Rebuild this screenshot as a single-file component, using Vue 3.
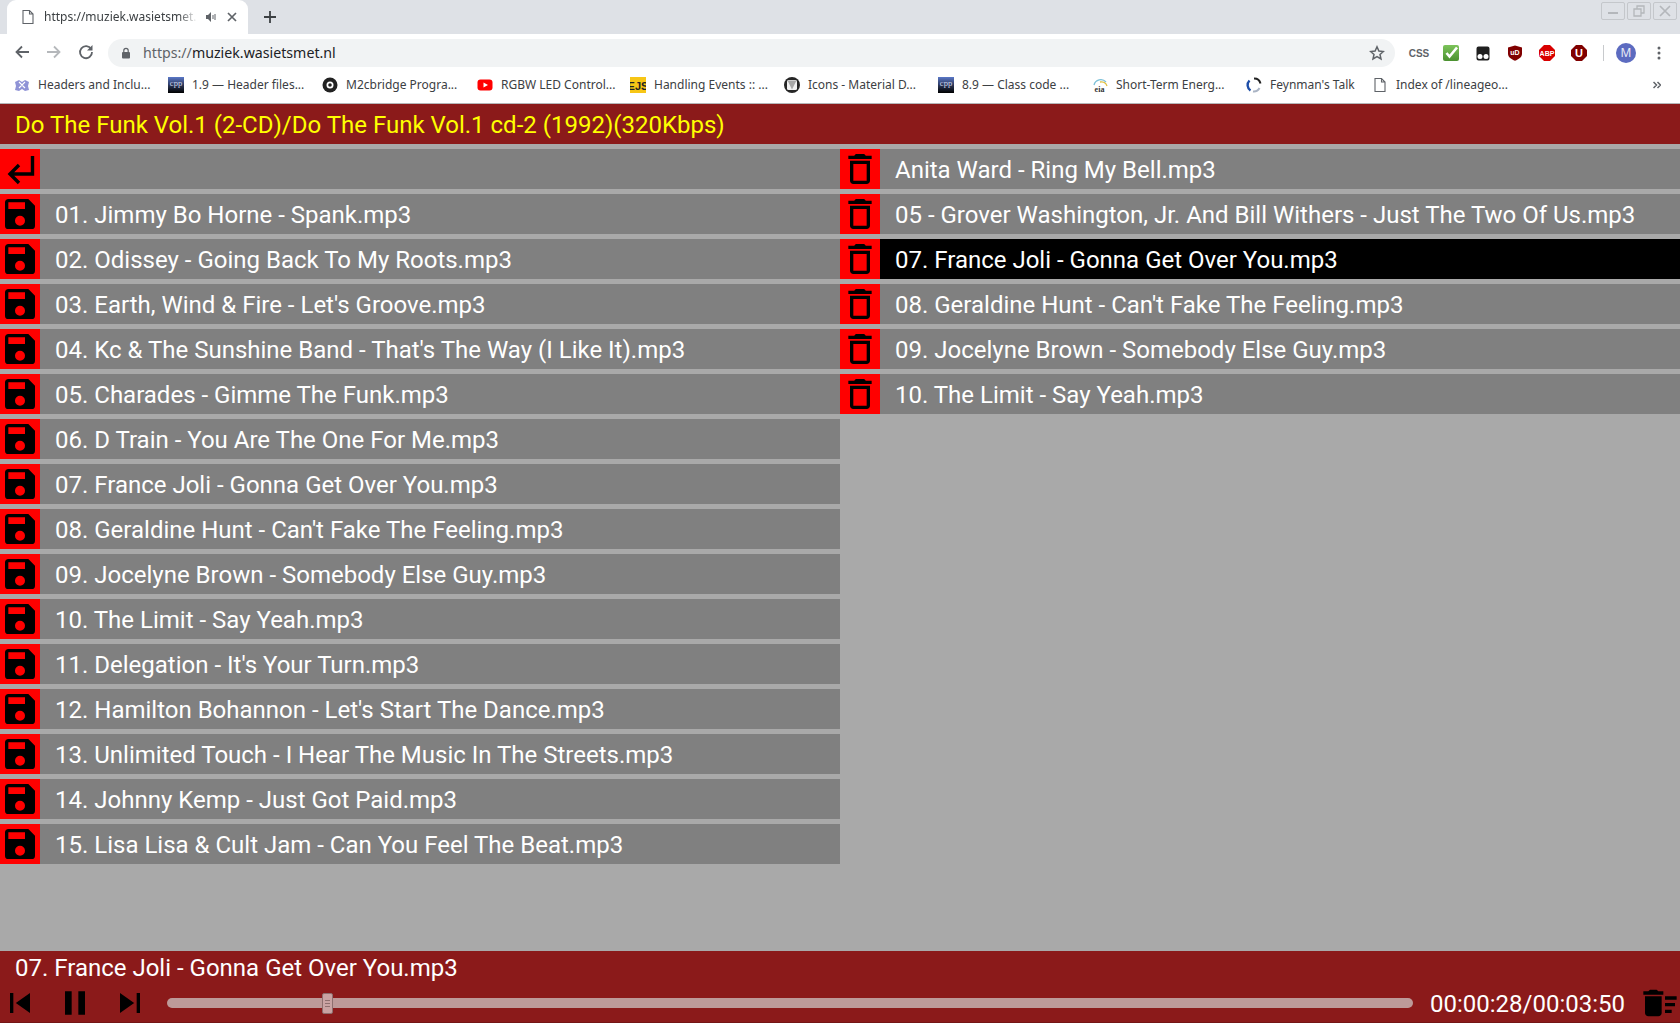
<script setup>
const leftTracks = [
  "01. Jimmy Bo Horne - Spank.mp3",
  "02. Odissey - Going Back To My Roots.mp3",
  "03. Earth, Wind & Fire - Let's Groove.mp3",
  "04. Kc & The Sunshine Band - That's The Way (I Like It).mp3",
  "05. Charades - Gimme The Funk.mp3",
  "06. D Train - You Are The One For Me.mp3",
  "07. France Joli - Gonna Get Over You.mp3",
  "08. Geraldine Hunt - Can't Fake The Feeling.mp3",
  "09. Jocelyne Brown - Somebody Else Guy.mp3",
  "10. The Limit - Say Yeah.mp3",
  "11. Delegation - It's Your Turn.mp3",
  "12. Hamilton Bohannon - Let's Start The Dance.mp3",
  "13. Unlimited Touch - I Hear The Music In The Streets.mp3",
  "14. Johnny Kemp - Just Got Paid.mp3",
  "15. Lisa Lisa & Cult Jam - Can You Feel The Beat.mp3",
];
const rightTracks = [
  { name: "Anita Ward - Ring My Bell.mp3" },
  { name: "05 - Grover Washington, Jr. And Bill Withers - Just The Two Of Us.mp3" },
  { name: "07. France Joli - Gonna Get Over You.mp3", active: true },
  { name: "08. Geraldine Hunt - Can't Fake The Feeling.mp3" },
  { name: "09. Jocelyne Brown - Somebody Else Guy.mp3" },
  { name: "10. The Limit - Say Yeah.mp3" },
];
const bookmarks = [
  { label: "Headers and Inclu...", kind: "puzzle", w: 154 },
  { label: "1.9 — Header files...", kind: "cpp", w: 154 },
  { label: "M2cbridge Progra...", kind: "disc", w: 155 },
  { label: "RGBW LED Control...", kind: "yt", w: 153 },
  { label: "Handling Events :: ...", kind: "ejs", w: 154 },
  { label: "Icons - Material D...", kind: "mat", w: 154 },
  { label: "8.9 — Class code ...", kind: "cpp", w: 154 },
  { label: "Short-Term Energ...", kind: "eia", w: 154 },
  { label: "Feynman's Talk", kind: "fey", w: 126 },
  { label: "Index of /lineageo...", kind: "page", w: 140 },
];
</script>

<template>
  <div class="page">
    <div class="tabstrip">
      <div class="tab">
        <svg class="tab-fav" width="16" height="16" viewBox="0 0 16 16"><path d="M3 1.500h6.500L13 5v9.500H3z M9.500 1.500V5H13" fill="none" stroke="#5f6368" stroke-width="1.100"/></svg>
        <span class="tab-title">https://muziek.wasietsmet.r</span>
        <svg class="tab-audio" width="12" height="12" viewBox="0 0 12 12"><path d="M1 4h2l3-3v10L3 8H1z" fill="#5f6368"/><path d="M8 4v4M10 3v6" stroke="#5f6368" stroke-width="1"/></svg>
        <svg class="tab-close" width="10" height="10" viewBox="0 0 10 10"><path d="M1 1l8 8M9 1l-8 8" stroke="#5f6368" stroke-width="1.700"/></svg>
      </div>
      <svg class="new-tab" width="14" height="14" viewBox="0 0 14 14"><path d="M7 1v12M1 7h12" stroke="#3c4043" stroke-width="1.800"/></svg>
      <div class="win-controls">
        <div class="win-btn"><svg width="14" height="10" viewBox="0 0 14 10"><path d="M2 7h10" stroke="#b4b7bb" stroke-width="2"/></svg></div>
        <div class="win-btn"><svg width="14" height="12" viewBox="0 0 14 12"><path d="M2 4h7v7H2z M5 4V1h7v7H9" fill="none" stroke="#b4b7bb" stroke-width="1.300"/></svg></div>
        <div class="win-btn"><svg width="14" height="12" viewBox="0 0 14 12"><path d="M2 1l10 10M12 1L2 11" stroke="#b4b7bb" stroke-width="1.700"/></svg></div>
      </div>
    </div>

    <div class="toolbar">
      <svg class="nav" width="16" height="16" viewBox="0 0 16 16"><path d="M15 8H2.500M8 2.500L2.500 8 8 13.500" fill="none" stroke="#5f6368" stroke-width="1.800"/></svg>
      <svg class="nav" width="16" height="16" viewBox="0 0 16 16"><path d="M1 8h12.500M8 2.500L13.500 8 8 13.500" fill="none" stroke="#b5b8bb" stroke-width="1.800"/></svg>
      <svg class="nav" width="16" height="16" viewBox="0 0 16 16"><path d="M13.200 5.200A6 6 0 1 0 14 8" fill="none" stroke="#5f6368" stroke-width="1.800"/><path d="M14.500 1v5.500H9z" fill="#5f6368"/></svg>
      <div class="omnibox">
        <svg width="10" height="12" viewBox="0 0 10 12"><path d="M2.800 5V3.500a2.200 2.200 0 0 1 4.400 0V5" fill="none" stroke="#5f6368" stroke-width="1.200"/><rect x="1" y="5" width="8" height="6.500" rx="1" fill="#5f6368"/></svg>
        <span class="url"><span class="scheme">https://</span>muziek.wasietsmet.nl</span>
        <svg class="star" width="16" height="16" viewBox="0 0 16 16"><path d="M8 1.800l1.900 4.200 4.500.5-3.400 3 1 4.500L8 11.700 4 14l1-4.500-3.400-3 4.500-.5z" fill="none" stroke="#5f6368" stroke-width="1.500"/></svg>
      </div>
      <div class="extensions">
        <span class="ext"><span class="ext-css">CSS</span></span>
        <span class="ext">
          <svg width="16" height="16" viewBox="0 0 16 16">
            <defs><linearGradient id="chk" x1="0" y1="0" x2="0" y2="1"><stop offset="0" stop-color="#7cc35a"/><stop offset="1" stop-color="#4b9130"/></linearGradient></defs>
            <rect width="16" height="16" rx="2" fill="url(#chk)"/><path d="M3.500 8l3 3.500L14 2.500" fill="none" stroke="#fff" stroke-width="2.600"/>
          </svg>
        </span>
        <span class="ext"><svg width="16" height="16" viewBox="0 0 16 16"><path d="M3.500 1.500h9a2 2 0 0 1 2 2v10a2 2 0 0 1-2 2h-9a2 2 0 0 1-2-2v-10a2 2 0 0 1 2-2z" fill="#1f1f1f"/><circle cx="5" cy="11.500" r="2.500" fill="#fff"/><circle cx="11" cy="11.500" r="2.500" fill="#fff"/></svg></span>
        <span class="ext"><svg width="16" height="16" viewBox="0 0 16 16"><path d="M1 2.500L8 .5l7 2V9c0 3-3.500 5.500-7 6.800C4.500 14.500 1 12 1 9z" fill="#800000"/><text x="8" y="10" text-anchor="middle" class="ext-txt">uD</text></svg></span>
        <span class="ext"><svg width="16" height="16" viewBox="0 0 16 16"><path d="M5 0h6l5 5v6l-5 5H5l-5-5V5z" fill="#d80000"/><text x="8" y="10.800" text-anchor="middle" class="ext-abp">ABP</text></svg></span>
        <span class="ext"><svg width="16" height="16" viewBox="0 0 16 16"><path d="M5 0h6l5 5v6l-5 5H5l-5-5V5z" fill="#800000"/><text x="8" y="12" text-anchor="middle" class="ext-u">U</text></svg></span>
        <span class="sep"></span>
        <span class="avatar">M</span>
        <svg class="dots" width="4" height="14" viewBox="0 0 4 14"><circle cx="2" cy="2" r="1.500" fill="#5f6368"/><circle cx="2" cy="7" r="1.500" fill="#5f6368"/><circle cx="2" cy="12" r="1.500" fill="#5f6368"/></svg>
      </div>
    </div>

    <div class="bookmarks">
      <div v-for="b in bookmarks" :key="b.label" class="bm" :style="{ width: b.w + 'px' }">
        <svg width="16" height="16" viewBox="0 0 16 16" class="bm-ico">
          <template v-if="b.kind === 'puzzle'">
            <path d="M1 5l4-2 3 2 3-2 4 2-1 4 1 4-4 1-3-2-3 2-4-1 1-4z" fill="#8f93d6"/>
            <path d="M5 5l3 3 3-3M5 11l3-3 3 3" fill="none" stroke="#fff" stroke-width="1.200"/>
          </template>
          <template v-else-if="b.kind === 'cpp'">
            <defs><linearGradient id="cppg" x1="0" y1="0" x2="0" y2="1"><stop offset="0" stop-color="#5a78c8"/><stop offset="0.55" stop-color="#28324f"/><stop offset="1" stop-color="#000"/></linearGradient></defs>
            <rect width="16" height="16" fill="url(#cppg)"/>
            <text x="8" y="8.500" text-anchor="middle" class="bm-cpp">cpp</text>
          </template>
          <template v-else-if="b.kind === 'disc'">
            <circle cx="8" cy="8" r="7.500" fill="#222"/>
            <circle cx="8" cy="8" r="3.500" fill="#fff"/>
            <circle cx="8" cy="8" r="1.800" fill="#222"/>
          </template>
          <template v-else-if="b.kind === 'yt'">
            <rect x="0.500" y="2.500" width="15" height="11" rx="3" fill="#f00"/>
            <path d="M6.500 5.500v5L11 8z" fill="#fff"/>
          </template>
          <template v-else-if="b.kind === 'ejs'">
            <rect width="16" height="16" fill="#f7c616"/>
            <text x="8" y="12.500" text-anchor="middle" class="bm-ejs">EJS</text>
          </template>
          <template v-else-if="b.kind === 'mat'">
            <circle cx="8" cy="8" r="8" fill="#262626"/>
            <rect x="3" y="3" width="10" height="10" rx="1.500" fill="#f2f2f2"/>
            <path d="M3.500 3.500h9L8 12.500z" fill="#a8a8a8"/>
          </template>
          <template v-else-if="b.kind === 'eia'">
            <path d="M2 8a7 7 0 0 1 12-3" fill="none" stroke="#7cc0d8" stroke-width="1.300"/>
            <path d="M8 5a6 6 0 0 1 7 4" fill="none" stroke="#e0c040" stroke-width="1.300"/>
            <text x="7.500" y="14.500" text-anchor="middle" class="bm-eia">eia</text>
          </template>
          <template v-else-if="b.kind === 'fey'">
            <path d="M8 1.500a6.500 6.500 0 0 1 6.500 5" fill="none" stroke="#222" stroke-width="2"/>
            <path d="M3.500 3.500a6.500 6.500 0 0 0 1 10" fill="none" stroke="#1d4ea8" stroke-width="2.400"/>
            <path d="M7 14.500a6.500 6.500 0 0 0 6.500-3.500" fill="none" stroke="#aab4c4" stroke-width="2"/>
          </template>
          <template v-else>
            <path d="M3 1.500h6.500L13 5v9.500H3z M9.500 1.500V5H13" fill="none" stroke="#5f6368" stroke-width="1.100"/>
          </template>
        </svg>
        <span class="bm-label">{{ b.label }}</span>
      </div>
      <svg class="bm-more" width="8" height="8" viewBox="0 0 8 8"><path d="M.5 1l3 3-3 3M4.500 1l3 3-3 3" fill="none" stroke="#5f6368" stroke-width="1.500"/></svg>
    </div>

    <div class="app">
      <header class="title">Do The Funk Vol.1 (2-CD)/Do The Funk Vol.1 cd-2 (1992)(320Kbps)</header>
      <main class="lists">
        <div class="col">
          <div class="row">
            <span class="act">
              <svg width="40" height="40" viewBox="0 0 40 40"><path d="M32.500 7v18H11M19 16l-9 9 9 9" fill="none" stroke="#000" stroke-width="3.400"/></svg>
            </span>
            <span class="name"></span>
          </div>
          <div v-for="t in leftTracks" :key="t" class="row">
            <span class="act">
              <svg width="40" height="40" viewBox="0 0 24 24"><path d="M15,9H5V5H15M12,19A3,3 0 0,1 9,16A3,3 0 0,1 12,13A3,3 0 0,1 15,16A3,3 0 0,1 12,19M17,3H5C3.890,3 3,3.900 3,5V19A2,2 0 0,0 5,21H19A2,2 0 0,0 21,19V7L17,3Z"/></svg>
            </span>
            <span class="name">{{ t }}</span>
          </div>
        </div>
        <div class="col">
          <div v-for="t in rightTracks" :key="t.name" class="row" :class="{ active: t.active }">
            <span class="act">
              <svg width="40" height="40" viewBox="0 0 24 24"><path d="M6 19c0 1.100.9 2 2 2h8c1.100 0 2-.9 2-2V7H6v12zM8 9h8v10H8V9zm7.500-5l-1-1h-5l-1 1H5v2h14V4z"/></svg>
            </span>
            <span class="name">{{ t.name }}</span>
          </div>
        </div>
      </main>
      <footer class="player">
        <div class="now">07. France Joli - Gonna Get Over You.mp3</div>
        <div class="controls">
          <svg width="40" height="40" viewBox="0 0 24 24"><path d="M6 6h2v12H6zm3.500 6l8.500 6V6z"/></svg>
          <svg width="40" height="40" viewBox="0 0 24 24"><path d="M6 19h4V5H6v14zm8-14v14h4V5h-4z"/></svg>
          <svg width="40" height="40" viewBox="0 0 24 24"><path d="M6 18l8.500-6L6 6v12zM16 6v12h2V6h-2z"/></svg>
          <div class="slider">
            <div class="thumb"><i></i><i></i><i></i></div>
          </div>
          <span class="time">00:00:28/00:03:50</span>
          <svg width="40" height="40" viewBox="0 0 24 24"><path d="M15 16h4v2h-4zm0-8h7v2h-7zm0 4h6v2h-6zM3 18c0 1.100.9 2 2 2h6c1.100 0 2-.9 2-2V8H3v10zM14 5h-3l-1-1H6L5 5H2v2h12z"/></svg>
        </div>
      </footer>
    </div>
  </div>
</template>

<style>
html, body { margin: 0; padding: 0; overflow: hidden; }
</style>

<style scoped>
.page {
  width: 1680px;
  height: 1023px;
  display: flex;
  flex-direction: column;
  overflow: hidden;
  font-family: "Noto Sans", sans-serif;
  background: #fff;
}
.tabstrip {
  height: 34px;
  flex: none;
  background: #dee1e6;
  display: flex;
  align-items: flex-end;
  padding-left: 7px;
}
.tab {
  position: relative;
  width: 241px;
  height: 34px;
  box-sizing: border-box;
  background: #fff;
  border-radius: 9px 9px 0 0;
  display: flex;
  align-items: center;
  padding: 0 0 1px 13px;
  flex: none;
}
.tab-fav { flex: none; }
.tab-title {
  margin-left: 8px;
  width: 153px;
  flex: none;
  white-space: nowrap;
  font-size: 12px;
  color: #3c4043;
  -webkit-mask-image: linear-gradient(to right, #000 88%, transparent);
  mask-image: linear-gradient(to right, #000 88%, transparent);
}
.tab-audio { margin-left: 8px; flex: none; }
.tab-close { margin-left: 10px; flex: none; }
.new-tab { margin: 0 0 10px 15px; flex: none; }
.win-controls {
  margin-left: auto;
  align-self: flex-start;
  display: flex;
  gap: 2px;
  padding: 2px 3px 0 0;
}
.win-btn {
  width: 24px;
  height: 18px;
  box-sizing: border-box;
  border: 1px solid #c4c7cb;
  border-radius: 2px;
  display: flex;
  align-items: center;
  justify-content: center;
}
.toolbar {
  height: 33px;
  flex: none;
  background: #fff;
  display: flex;
  align-items: flex-end;
}
.nav { flex: none; margin: 0 0 7px 14px; }
.nav + .nav { margin-left: 16px; }
.omnibox {
  width: 1287px;
  height: 28px;
  margin-left: 14px;
  box-sizing: border-box;
  flex: none;
  background: #f1f3f4;
  border-radius: 14px;
  display: flex;
  align-items: center;
  padding: 0 10px 0 13px;
}
.url {
  margin: 0 0 2px 12px;
  font-size: 14.200px;
  color: #202124;
  flex: 1;
}
.scheme { color: #5f6368; }
.extensions {
  display: flex;
  align-items: center;
  height: 28px;
  padding-left: 8px;
  flex: none;
}
.ext {
  width: 32px;
  height: 16px;
  display: flex;
  align-items: center;
  justify-content: center;
  flex: none;
}
.ext-css {
  font-family: "Liberation Sans", sans-serif;
  font-weight: 700;
  font-size: 10px;
  color: #5f6368;
}
.ext-txt, .ext-abp, .ext-u {
  font-family: "Liberation Sans", sans-serif;
  font-weight: 700;
  fill: #fff;
}
.ext-txt { font-size: 7px; }
.ext-abp { font-size: 7px; }
.ext-u { font-size: 11px; }
.sep { width: 1px; height: 16px; background: #c8cacd; margin-left: 8px; flex: none; }
.avatar {
  width: 20px;
  height: 20px;
  margin-left: 12px;
  border-radius: 50%;
  background: #5c6bc0;
  color: #e8eaf6;
  font-size: 12px;
  line-height: 20px;
  text-align: center;
  flex: none;
}
.dots { margin-left: 21px; flex: none; }
.bookmarks {
  height: 37px;
  flex: none;
  box-sizing: border-box;
  background: #fff;
  border-bottom: 1px solid #b5b6b8;
  display: flex;
  align-items: center;
  padding-left: 14px;
}
.bm { display: flex; align-items: center; flex: none; }
.bm-ico { flex: none; }
.bm-label {
  margin: 0 0 2px 8px;
  font-size: 12px;
  color: #3c4043;
  white-space: nowrap;
}
.bm-cpp { font-size: 8.500px; fill: #cfd6ea; font-family: "Liberation Serif", serif; }
.bm-ejs { font-size: 11px; font-weight: 700; fill: #222; font-family: "Liberation Sans", sans-serif; }
.bm-eia { font-size: 8px; font-weight: 700; fill: #333; font-family: "Liberation Serif", serif; }
.bm-more {
  margin-left: auto;
  margin-right: 19px;
  flex: none;
}
.app {
  flex: 1;
  min-height: 0;
  display: flex;
  flex-direction: column;
  background: #a9a9a9;
  font-family: Roboto, sans-serif;
  font-size: 24px;
  color: #fff;
}
.title {
  height: 40px;
  flex: none;
  line-height: 42px;
  padding-left: 15px;
  background: #8b1a1a;
  color: #ff0;
}
.lists {
  flex: 1;
  min-height: 0;
  display: grid;
  grid-template-columns: 840px 840px;
  align-content: start;
  padding-top: 5px;
}
.col { display: flex; flex-direction: column; gap: 5px; }
.row {
  height: 40px;
  display: flex;
  background: #808080;
}
.row.active { background: #000; }
.act {
  width: 40px;
  height: 40px;
  flex: none;
  background: #f00;
}
.act svg { display: block; }
.name {
  padding-left: 15px;
  line-height: 42px;
  white-space: nowrap;
}
.player {
  height: 72px;
  flex: none;
  background: #8b1a1a;
  box-shadow: inset 0 -1px 0 #741515;
}
.now {
  height: 32px;
  line-height: 34px;
  padding-left: 15px;
}
.controls {
  height: 40px;
  display: flex;
  align-items: center;
  gap: 15px;
}
.controls svg { flex: none; display: block; }
.slider {
  position: relative;
  width: 1246px;
  height: 10px;
  margin-left: 2px;
  border-radius: 5px;
  background: #bd9a99;
  flex: none;
}
.thumb {
  position: absolute;
  left: 155px;
  top: -5px;
  width: 11px;
  height: 21px;
  box-sizing: border-box;
  background: #c9a3a3;
  border: 1px solid #8e6f6f;
  border-radius: 2px;
  display: flex;
  flex-direction: column;
  align-items: center;
  justify-content: center;
  gap: 2px;
}
.thumb i { display: block; width: 5px; height: 1px; background: #8e6f6f; }
.time { width: 195px; margin-left: 2px; padding-top: 2px; flex: none; white-space: nowrap; }
</style>
